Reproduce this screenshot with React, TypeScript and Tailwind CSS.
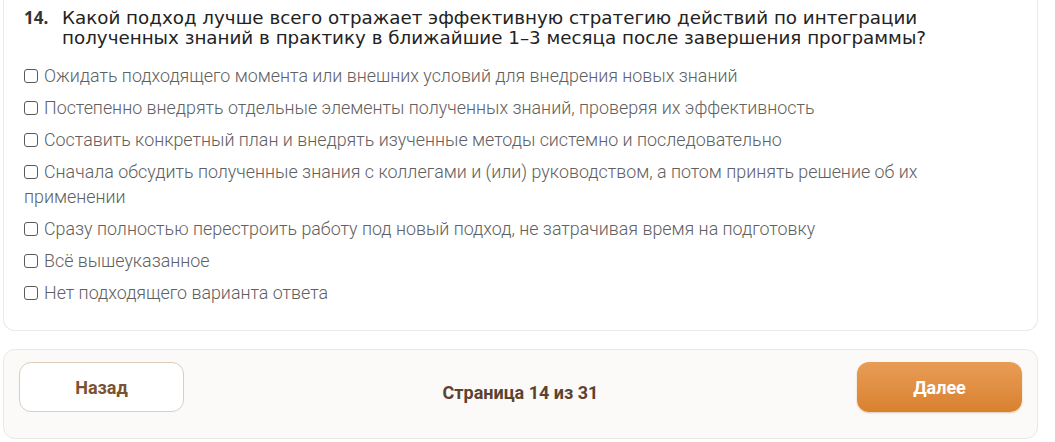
import { useState } from 'react';

const options = [
  'Ожидать подходящего момента или внешних условий для внедрения новых знаний',
  'Постепенно внедрять отдельные элементы полученных знаний, проверяя их эффективность',
  'Составить конкретный план и внедрять изученные методы системно и последовательно',
  'Сначала обсудить полученные знания с коллегами и (или) руководством, а потом принять решение об их применении',
  'Сразу полностью перестроить работу под новый подход, не затрачивая время на подготовку',
  'Всё вышеуказанное',
  'Нет подходящего варианта ответа',
];

export default function App() {
  const [checked, setChecked] = useState<number[]>([]);

  const toggle = (i: number) =>
    setChecked(prev => (prev.includes(i) ? prev.filter(x => x !== i) : [...prev, i]));

  return (
    <div className="w-[1055px] h-[442px] bg-white px-[3px] font-['Roboto',sans-serif] overflow-hidden">
      {/* Question card */}
      <div className="w-[1035px] bg-white border-x border-b border-[#ece8e4] rounded-b-xl pl-[20px] pr-[48px] pt-[8px] pb-[25px]">
        <div className="flex items-start">
          <span className="w-[38px] shrink-0 text-[17px] leading-[20px] font-bold text-[#333] font-['Open_Sans',sans-serif]">14.</span>
          <h2 className="w-[900px] text-[18.3px] leading-[20px] text-[#222] font-['DejaVu_Sans',sans-serif]">
            Какой подход лучше всего отражает эффективную стратегию действий по интеграции полученных знаний в практику в ближайшие 1–3 месяца после завершения программы?
          </h2>
        </div>

        <div className="mt-[16px] flex flex-col gap-[7.5px]">
          {options.map((opt, i) => (
            <label
              key={i}
              className="block cursor-pointer text-[17.85px] leading-[24.5px] text-[#606060] font-light"
              onClick={() => toggle(i)}
            >
              <span
                className={`inline-block align-[-1px] w-[14px] h-[14px] mr-[6px] rounded-[3px] border border-[#5a5a5a] ${
                  checked.includes(i) ? 'bg-[#e08c3c]' : 'bg-white'
                }`}
              />
              {opt}
            </label>
          ))}
        </div>
      </div>

      {/* Navigation */}
      <div className="mt-[18px] w-[1035px] h-[90px] bg-[#fcfaf8] border border-[#ece7e2] rounded-xl flex items-start justify-between px-[15px] pt-[12px]">
        <button className="w-[165px] h-[50px] bg-white border border-[#dccdbd] rounded-xl text-[18px] font-bold text-[#7a5234]">
          Назад
        </button>
        <span className="mt-[20px] text-[18px] leading-[22px] font-bold text-[#5b4330]">Страница 14 из 31</span>
        <button className="w-[165px] h-[50px] rounded-xl bg-gradient-to-b from-[#e89d55] to-[#d9812e] shadow-[0_1px_2px_rgba(150,80,20,0.3)] text-[18px] font-bold text-white">
          Далее
        </button>
      </div>
    </div>
  );
}
